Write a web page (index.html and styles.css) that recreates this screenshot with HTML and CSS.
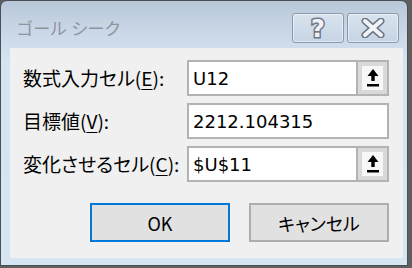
FILE: index.html
```html
<!DOCTYPE html>
<html lang="ja">
<head>
<meta charset="utf-8">
<title>ゴール シーク</title>
<link rel="stylesheet" href="styles.css">
</head>
<body>
<div class="window">
  <div class="titlebar">
    <span class="title">ゴール シーク</span>
    <div class="caption-buttons">
      <div class="cap-btn"><span class="help-glyph">?</span></div>
      <div class="cap-btn">
        <svg class="close-icon" width="24" height="20" viewBox="0 0 24 20">
          <path d="M4 3 L20 17 M20 3 L4 17" stroke="#6e7886" stroke-width="7" stroke-linecap="round" fill="none"/>
          <path d="M4 3 L20 17 M20 3 L4 17" stroke="#f1f3f6" stroke-width="4" stroke-linecap="round" fill="none"/>
        </svg>
      </div>
    </div>
  </div>
  <div class="content">
    <div class="form">
      <span class="label">数式入力セル(<u>E</u>):</span>
      <div class="field">
        <span class="value">U12</span>
        <span class="refedit">
          <svg width="14" height="18" viewBox="0 0 14 18"><path d="M7 0 L12.5 7 L8.7 7 L8.7 12 L5.3 12 L5.3 7 L1.5 7 Z" fill="#000"/><rect x="1" y="15" width="12" height="2.5" fill="#000"/></svg>
        </span>
      </div>
      <span class="label">目標値(<u>V</u>):</span>
      <div class="field">
        <span class="value">2212.104315</span>
      </div>
      <span class="label">変化させるセル(<u>C</u>):</span>
      <div class="field">
        <span class="value">$U$11</span>
        <span class="refedit">
          <svg width="14" height="18" viewBox="0 0 14 18"><path d="M7 0 L12.5 7 L8.7 7 L8.7 12 L5.3 12 L5.3 7 L1.5 7 Z" fill="#000"/><rect x="1" y="15" width="12" height="2.5" fill="#000"/></svg>
        </span>
      </div>
    </div>
    <div class="actions">
      <button class="btn btn-default">OK</button>
      <button class="btn">キャンセル</button>
    </div>
  </div>
</div>
</body>
</html>
```

FILE: styles.css
```css
html, body {
  margin: 0;
  padding: 0;
}
body {
  width: 412px;
  height: 268px;
  background: #5e5e5e;
  overflow: hidden;
  font-family: "Noto Sans CJK JP", "Noto Sans", sans-serif;
}
.window {
  box-sizing: border-box;
  width: 408px;
  height: 266px;
  border: 1px solid #4a4f57;
  border-radius: 7px 7px 0 0;
  background: linear-gradient(to bottom, #b8c8d9 0px, #c9d7e6 30px, #d6e3f1 60px, #d7e4f2 100%);
  padding: 0 4px 7px 9px;
  display: flex;
  flex-direction: column;
}
.titlebar {
  height: 47px;
  flex: none;
  display: flex;
  align-items: flex-start;
  justify-content: space-between;
  padding: 12px 4px 0 7px;
  box-sizing: border-box;
}
.title {
  font-size: 17px;
  line-height: 30px;
  color: #8d949d;
  font-feature-settings: "palt";
  letter-spacing: 0.5px;
}
.caption-buttons {
  display: flex;
  gap: 3px;
}
.cap-btn {
  box-sizing: border-box;
  width: 52px;
  height: 30px;
  border: 1px solid #8a99ab;
  border-radius: 3px;
  background: linear-gradient(to bottom, #d8e3ee, #c6d4e3);
  box-shadow: inset 0 0 0 1px rgba(255, 255, 255, 0.45);
  display: flex;
  align-items: center;
  justify-content: center;
}
.help-glyph {
  font-family: "DejaVu Sans", sans-serif;
  font-weight: bold;
  font-size: 24px;
  line-height: 1;
  color: #eef1f5;
  -webkit-text-stroke: 3px #6e7886;
  paint-order: stroke fill;
  margin-top: 2px;
}
.close-icon {
  display: block;
}
.content {
  flex: 1;
  background: #f0f0f0;
  border: 1px solid #eef2f7;
  padding: 11px 12px 14px 12px;
  display: flex;
  flex-direction: column;
}
.form {
  display: grid;
  grid-template-columns: 164px 202px;
  grid-auto-rows: 36px;
  row-gap: 7px;
  align-items: center;
}
.label {
  font-size: 19px;
  color: #000;
  font-feature-settings: "palt";
  white-space: nowrap;
  line-height: 36px;
}
.label u {
  text-decoration-thickness: 1px;
  text-underline-offset: 3px;
}
.field {
  box-sizing: border-box;
  height: 36px;
  border: 2px solid #b3b3b3;
  background: #fff;
  display: flex;
  align-items: center;
}
.value {
  flex: 1;
  padding-left: 4px;
  font-family: "DejaVu Sans", sans-serif;
  font-size: 18px;
  color: #000;
  white-space: nowrap;
}
.refedit {
  box-sizing: border-box;
  width: 31px;
  height: 100%;
  border-left: 2px solid #b3b3b3;
  background: #f7f7f7;
  box-shadow: inset 0 0 0 4px #d9d9d9;
  display: flex;
  align-items: center;
  justify-content: center;
}
.refedit svg {
  display: block;
}
.actions {
  margin-top: 21px;
  display: flex;
  justify-content: flex-end;
  gap: 19px;
  padding-right: 1px;
}
.btn {
  box-sizing: border-box;
  width: 140px;
  height: 39px;
  border: 2px solid #adadad;
  background: #e1e1e1;
  font-family: "Noto Sans CJK JP", "Noto Sans", sans-serif;
  font-size: 18px;
  font-feature-settings: "palt";
  color: #000;
  padding: 0;
  margin: 0;
}
.btn-default {
  border-color: #0078d7;
}
```
